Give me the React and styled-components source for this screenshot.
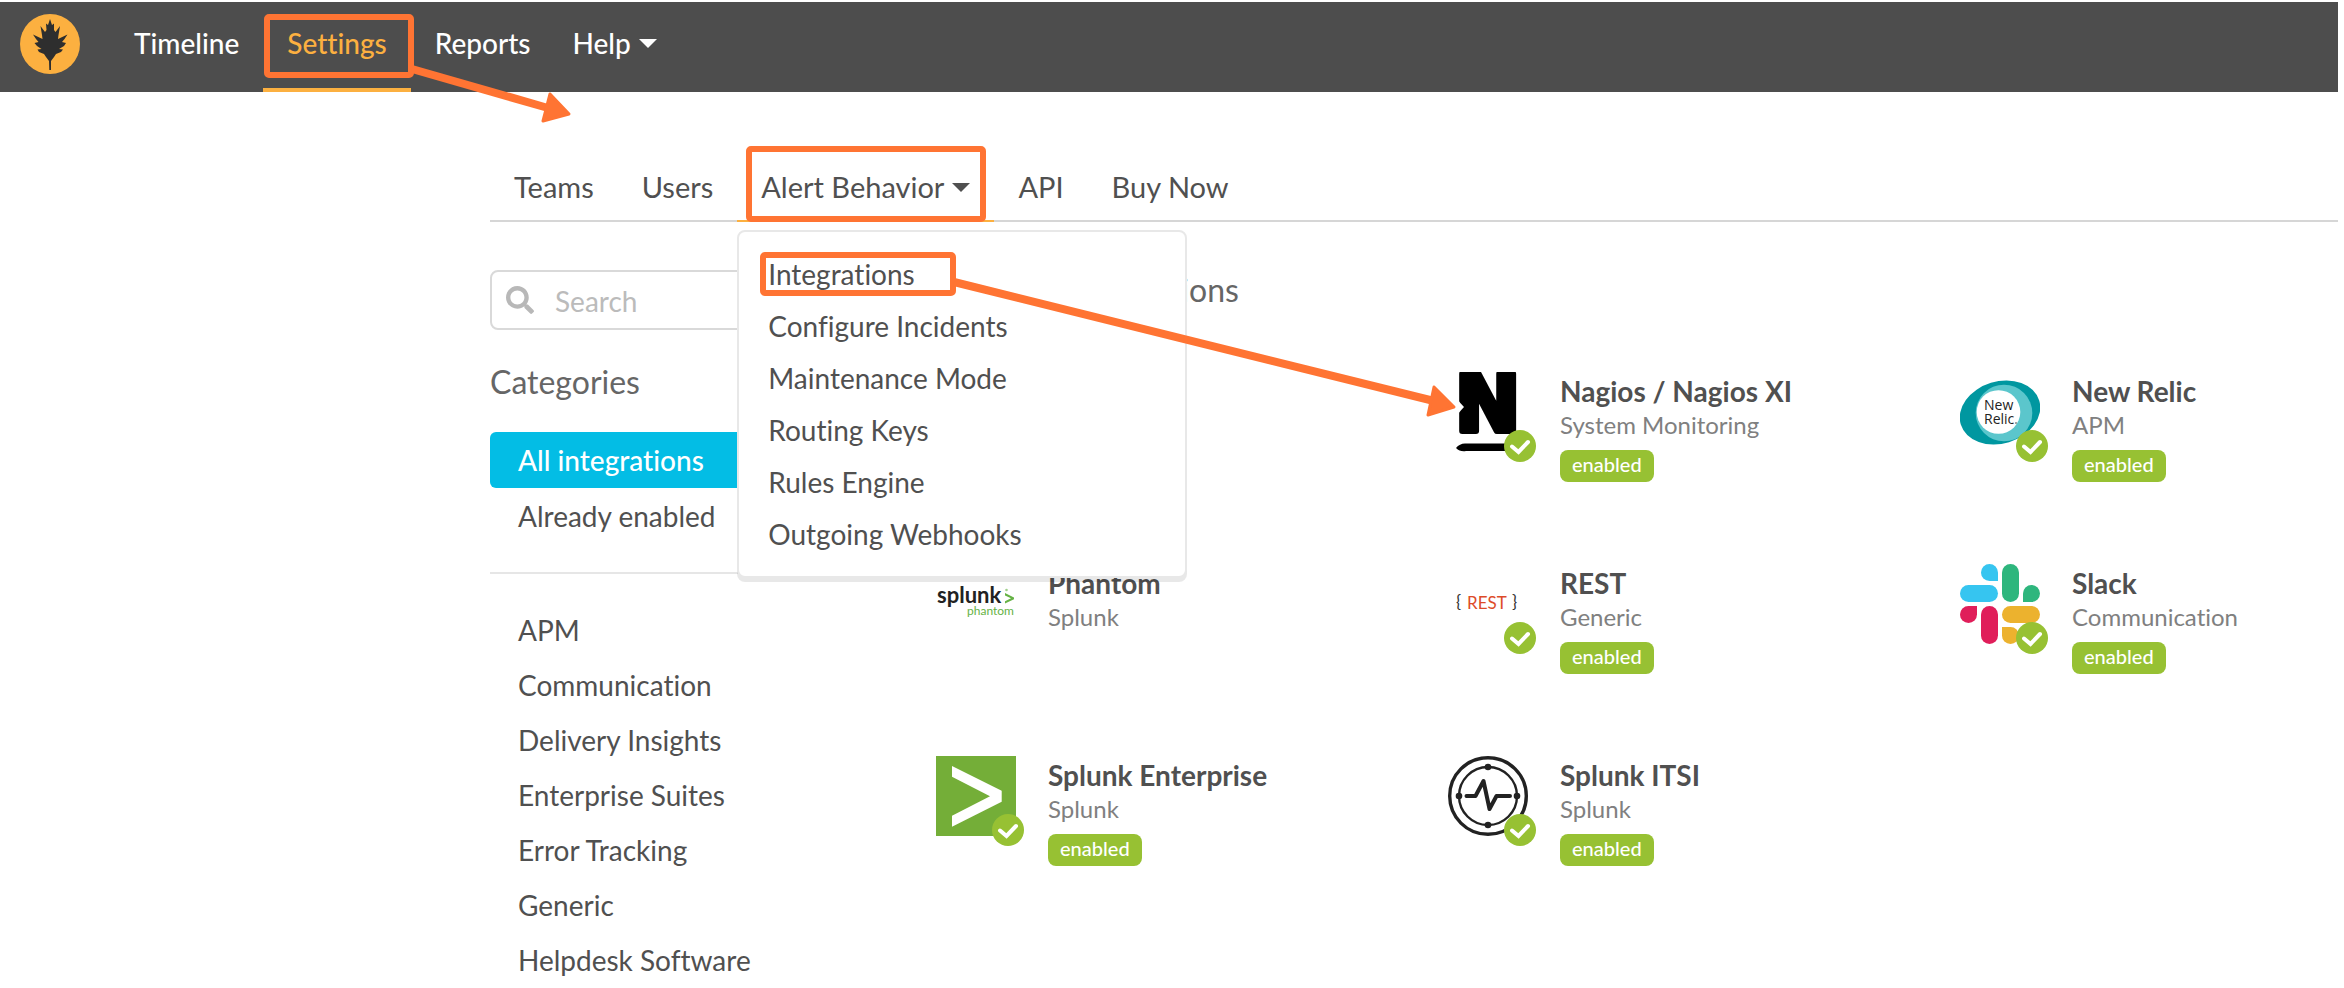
import React from "react";
import styled, { createGlobalStyle, css } from "styled-components";
import { FaSearch } from "react-icons/fa";

const GlobalStyle = createGlobalStyle`
  *, *::before, *::after { box-sizing: border-box; }
  body {
    margin: 0;
    padding: 2px 6px 0 0;
    background: #fff;
    color: #505050;
    font: 400 28px/40px Lato, "Open Sans", sans-serif;
    font-variant-ligatures: no-common-ligatures;
  }
  ul { list-style: none; margin: 0; padding: 0; }
  a { color: inherit; text-decoration: none; }
  h2, h3, p { margin: 0; }
`;

const Page = styled.div`
  position: relative;
`;

const TopBar = styled.header`
  display: flex;
  height: 90px;
  padding-left: 20px;
  background: #4d4d4d;
  color: #fff;
`;

const Logo = styled.a`
  display: flex;
  align-self: center;
  margin: 0 30px 6px 0;
`;

const TopNav = styled.nav`
  display: flex;
`;

const linkReset = css`
  border: 0;
  background: none;
  font: inherit;
  font-variant-ligatures: inherit;
  color: inherit;
  cursor: pointer;
  display: flex;
  align-items: center;
`;

const TopLink = styled.a`
  ${linkReset}
  padding: 0 ${(p) => (p.$tight ? 18 : 24)}px 4px;
  border-bottom: 4px solid transparent;
  font-weight: 500;
  ${(p) => p.$active && css`
    color: #fcb040;
    border-bottom-color: #fcb040;
  `}
`;

const Caret = styled.span`
  margin-left: 8px;
  border: 9px solid transparent;
  border-top-color: currentColor;
  border-bottom: 0;
`;

const Content = styled.div`
  padding: 62px 0 0 490px;
`;

const TabBar = styled.nav`
  display: flex;
  border-bottom: 2px solid #d6d6d6;
  font-size: 29px;
`;

const TabSlot = styled.div`
  position: relative;
`;

const Tab = styled.a`
  ${linkReset}
  height: 68px;
  padding: 0 24px;
  margin-bottom: -2px;
  border-bottom: 2px solid ${(p) => (p.$active ? "#fcb040" : "transparent")};
`;

const Menu = styled.ul`
  position: absolute;
  z-index: 2;
  top: calc(100% + 10px);
  left: 0;
  width: 450px;
  padding: 16px 0;
  border: 2px solid #e8e8e8;
  border-radius: 8px;
  background: #fff;
  box-shadow: 0 4px 0 rgba(0, 0, 0, 0.09);
  font-size: 28px;
`;

const MenuLink = styled.a`
  display: block;
  padding: 0 29px;
  line-height: 52px;
`;

const Columns = styled.div`
  display: grid;
  grid-template-columns: 400px minmax(0, 1fr);
  column-gap: 46px;
  padding-top: 48px;
`;

const SearchBox = styled.label`
  display: flex;
  align-items: center;
  height: 60px;
  padding: 0 14px;
  gap: 21px;
  border: 2px solid #d9d9d9;
  border-radius: 8px;
  color: #b8b8b8;
`;

const SearchInput = styled.input`
  flex: 1;
  min-width: 0;
  padding: 2px 0 0;
  border: 0;
  outline: 0;
  background: none;
  font: inherit;
  &::placeholder { color: #bbb; opacity: 1; }
`;

const SectionTitle = styled.h2`
  font-size: 32px;
  font-weight: 400;
  line-height: 40px;
  color: #666;
`;

const CategoryTitle = styled(SectionTitle)`
  margin: 32px 0 30px;
`;

const FilterLink = styled.a`
  display: block;
  padding: 0 28px;
  line-height: 56px;
  border-radius: 6px;
  ${(p) => p.$active && css`
    background: #03bde5;
    color: #fff;
    font-weight: 500;
  `}
`;

const CategoryList = styled.ul`
  margin-top: 28px;
  padding-top: 29px;
  border-top: 2px solid #e6e6e6;
`;

const CategoryLink = styled(FilterLink)`
  line-height: 55px;
`;

const CardGrid = styled.ul`
  display: grid;
  grid-template-columns: 512px 512px minmax(0, 1fr);
  grid-auto-rows: 192px;
  margin-top: 62px;
`;

const Card = styled.li`
  grid-column-start: ${(p) => p.$column || "auto"};
  display: flex;
  gap: 32px;
`;

const LogoFrame = styled.div`
  position: relative;
  width: 80px;
  height: 80px;
  flex: none;
`;

const Check = styled.svg`
  position: absolute;
  right: -8px;
  bottom: -10px;
`;

const CardText = styled.div`
  padding-top: 2px;
`;

const CardTitle = styled.h3`
  font-size: 28px;
  font-weight: 700;
  line-height: 34px;
  white-space: nowrap;
`;

const CardKind = styled.p`
  font-size: 24px;
  line-height: 34px;
  color: #808080;
`;

const Enabled = styled.span`
  display: block;
  width: fit-content;
  margin-top: 8px;
  padding: 0 12px 4px;
  border-radius: 8px;
  background: #97c133;
  color: #fff;
  font-size: 20px;
  font-weight: 500;
  line-height: 28px;
`;

const Callouts = styled.svg`
  position: absolute;
  z-index: 3;
  top: -2px;
  left: 0;
  pointer-events: none;
`;

const LeafLogo = () => (
  <svg width="60" height="60" viewBox="0 0 60 60">
    <circle cx="30" cy="30" r="30" fill="#fcb040" />
    <path
      fill="#2e2e2e"
      d="M30 5L32 11L34 9.500L34 16L35.500 18L40 12L38.500 21L38 25L47.500 20.500L44.500 25L42 28L46 29L44 32L39 35L43 35.500L41 38L36 40L34 43L31 47L31 56H29.300L29 47L26 43L24 40L19 38L17.500 35.500L21.500 35L17 32L14.500 29L18.500 28L16 25L13 20.500L22.500 25L22 21L20.500 12L25 18L26.500 16L26 9.500L28 11Z"
    />
  </svg>
);

const NagiosLogo = () => (
  <svg width="80" height="80" viewBox="0 0 80 80">
    <text x="7" y="59" fontFamily="DejaVu Sans" fontWeight="700" fontSize="78" stroke="#000" strokeWidth="6" strokeLinejoin="round">N</text>
    <path d="M10 28Q12 31 16 35Q13 38 10 42Z" fill="#fff" />
    <path d="M8 76Q12 71 18 71.500H72Q78 72 80 75Q78 79 70 79H18Q12 80 8 76Z" />
  </svg>
);

const NewRelicLogo = () => (
  <svg width="80" height="80" viewBox="0 0 80 80">
    <ellipse cx="40" cy="40.500" rx="41" ry="31" fill="#0097a0" transform="rotate(-17 40 40.500)" />
    <circle cx="44" cy="41" r="28.300" fill="#5bc6cc" />
    <circle cx="38.500" cy="40" r="21.800" fill="#fff" />
    <g fontFamily="Open Sans" fontWeight="500" fontSize="14" fill="#222">
      <text x="24" y="38">New</text>
      <text x="24" y="52">Relic</text>
    </g>
    <circle cx="56" cy="51" r="1" fill="#888" />
  </svg>
);

const PhantomLogo = () => (
  <svg width="80" height="80" viewBox="0 0 80 80">
    <text x="1" y="39" fontFamily="Lato" fontWeight="700" fontSize="22" fill="#222">splunk</text>
    <path d="M69 29V31.500L75 34.300L69 37.200V39.600L78 35.200V33.500Z" fill="#65b245" />
    <circle cx="70.500" cy="26" r="1.300" fill="#9fd08b" />
    <text x="31" y="51" fontFamily="Lato" fontSize="12" fill="#65b245">phantom</text>
  </svg>
);

const RestLogo = () => (
  <svg width="80" height="80" viewBox="0 0 80 80" fontFamily="Lato" fontSize="17">
    <text x="8" y="44" fill="#333">{"{"}</text>
    <text x="19" y="45" fill="#dd4b28">REST</text>
    <text x="64" y="44" fill="#333">{"}"}</text>
  </svg>
);

const SlackLogo = () => (
  <svg width="80" height="80" viewBox="0 0 80 80">
    <g fill="#36c5f0">
      <path d="M38 17H29.500A8.500 8.500 0 1 1 38 8.500Z" />
      <rect x="0" y="21" width="38" height="17" rx="8.500" />
    </g>
    <g fill="#2eb67d">
      <rect x="42" y="0" width="17" height="38" rx="8.500" />
      <path d="M63 38V29.500A8.500 8.500 0 1 1 71.500 38Z" />
    </g>
    <g fill="#e01e5a">
      <path d="M17 42V50.500A8.500 8.500 0 1 1 8.500 42Z" />
      <rect x="21" y="42" width="17" height="38" rx="8.500" />
    </g>
    <g fill="#ecb22e">
      <rect x="42" y="42" width="38" height="17" rx="8.500" />
      <path d="M42 63H50.500A8.500 8.500 0 1 1 42 71.500Z" />
    </g>
  </svg>
);

const EnterpriseLogo = () => (
  <svg width="80" height="80" viewBox="0 0 80 80">
    <rect width="80" height="80" fill="#74ae38" />
    <path d="M16 10L65.700 34.700V45.700L16 70.700V59.700L54 40.200L16 20.700Z" fill="#fff" />
  </svg>
);

const ItsiLogo = () => (
  <svg width="80" height="80" viewBox="0 0 80 80" fill="none" stroke="#222">
    <circle cx="40" cy="40" r="38.300" strokeWidth="3.400" />
    <circle cx="40" cy="40" r="29" strokeWidth="2.400" />
    <path d="M18.500 40H27.500L35.500 25L41.500 53L48.500 40H62" strokeWidth="4" strokeLinecap="round" strokeLinejoin="round" />
    <g fill="#222" stroke="none">
      <circle cx="40" cy="11" r="3.300" />
      <circle cx="40" cy="69" r="3.300" />
      <circle cx="11" cy="40" r="3.300" />
      <circle cx="69" cy="40" r="3.300" />
    </g>
  </svg>
);

const CheckBadge = () => (
  <Check width="32" height="32" viewBox="0 0 32 32">
    <circle cx="16" cy="16" r="16" fill="#97c133" />
    <path d="M8 16.500L14.500 22L24 12" fill="none" stroke="#fff" strokeWidth="4" strokeLinecap="round" />
  </Check>
);

const menuItems = [
  "Integrations",
  "Configure Incidents",
  "Maintenance Mode",
  "Routing Keys",
  "Rules Engine",
  "Outgoing Webhooks",
];

const categories = [
  "APM",
  "Communication",
  "Delivery Insights",
  "Enterprise Suites",
  "Error Tracking",
  "Generic",
  "Helpdesk Software",
];

const integrations = [
  { name: "Nagios / Nagios XI", kind: "System Monitoring", Art: NagiosLogo, enabled: true, column: 2 },
  { name: "New Relic", kind: "APM", Art: NewRelicLogo, enabled: true },
  { name: "Phantom", kind: "Splunk", Art: PhantomLogo, enabled: false },
  { name: "REST", kind: "Generic", Art: RestLogo, enabled: true },
  { name: "Slack", kind: "Communication", Art: SlackLogo, enabled: true },
  { name: "Splunk Enterprise", kind: "Splunk", Art: EnterpriseLogo, enabled: true },
  { name: "Splunk ITSI", kind: "Splunk", Art: ItsiLogo, enabled: true },
];

export default function App() {
  return (
    <Page>
      <GlobalStyle />
      <TopBar>
        <Logo href="#" aria-label="Home"><LeafLogo /></Logo>
        <TopNav>
          <TopLink href="#">Timeline</TopLink>
          <TopLink href="#" $active>Settings</TopLink>
          <TopLink href="#">Reports</TopLink>
          <TopLink as="button" type="button" $tight>Help<Caret /></TopLink>
        </TopNav>
      </TopBar>

      <Content>
        <TabBar>
          <Tab href="#">Teams</Tab>
          <Tab href="#">Users</Tab>
          <TabSlot>
            <Tab as="button" type="button" $active>Alert Behavior<Caret /></Tab>
            <Menu>
              {menuItems.map((item) => (
                <li key={item}><MenuLink href="#">{item}</MenuLink></li>
              ))}
            </Menu>
          </TabSlot>
          <Tab href="#">API</Tab>
          <Tab href="#">Buy Now</Tab>
        </TabBar>

        <Columns>
          <aside>
            <SearchBox>
              <FaSearch size={28} />
              <SearchInput type="search" placeholder="Search" aria-label="Search" />
            </SearchBox>
            <CategoryTitle>Categories</CategoryTitle>
            <ul>
              <li><FilterLink href="#" $active>All integrations</FilterLink></li>
              <li><FilterLink href="#">Already enabled</FilterLink></li>
            </ul>
            <CategoryList>
              {categories.map((c) => (
                <li key={c}><CategoryLink href="#">{c}</CategoryLink></li>
              ))}
            </CategoryList>
          </aside>

          <main>
            <SectionTitle>3rd party integrations</SectionTitle>
            <CardGrid>
              {integrations.map(({ name, kind, Art, enabled, column }) => (
                <Card key={name} $column={column}>
                  <LogoFrame>
                    <Art />
                    {enabled && <CheckBadge />}
                  </LogoFrame>
                  <CardText>
                    <CardTitle>{name}</CardTitle>
                    <CardKind>{kind}</CardKind>
                    {enabled && <Enabled>enabled</Enabled>}
                  </CardText>
                </Card>
              ))}
            </CardGrid>
          </main>
        </Columns>
      </Content>

      <Callouts width="1500" height="440" fill="none" stroke="#ff7433" strokeLinejoin="round">
        <g strokeWidth="6">
          <rect x="267" y="17" width="144" height="58" rx="2" />
          <rect x="749" y="149" width="234" height="70" rx="2" />
          <rect x="763" y="255" width="190" height="38" rx="2" />
        </g>
        <g strokeWidth="8">
          <path d="M412 69L548 108" />
          <path d="M954 282L1434 401" />
        </g>
        <g fill="#ff7433" strokeWidth="3">
          <path d="M550 94L569 114L543 121Z" />
          <path d="M1434 387L1454 407L1428 415Z" />
        </g>
      </Callouts>
    </Page>
  );
}
